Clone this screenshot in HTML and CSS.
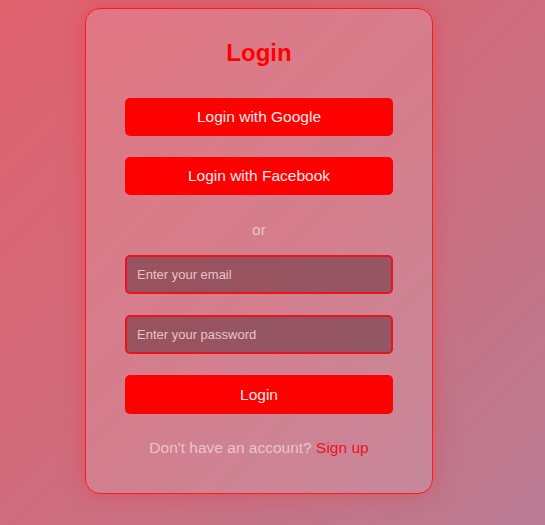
FILE: index.html
```html
<!DOCTYPE html>
<html>
<head>
<meta charset="utf-8">
<link rel="stylesheet" href="styles.css">
</head>
<body>
<div class="card">
  <h2 class="title">Login</h2>
  <button class="btn btn-first">Login with Google</button>
  <button class="btn btn-next">Login with Facebook</button>
  <p class="or">or</p>
  <input class="field field-first" type="email" placeholder="Enter your email">
  <input class="field field-next" type="password" placeholder="Enter your password">
  <button class="btn btn-submit">Login</button>
  <p class="footer">Don't have an account? <a class="signup" href="#">Sign up</a></p>
</div>
</body>
</html>
```
FILE: styles.css
```css
html, body {
  margin: 0;
  height: 100%;
}
body {
  background: linear-gradient(135deg, #e0626f 0%, #cf6d7e 50%, #b97c93 100%);
  font-family: "Liberation Sans", Arial, sans-serif;
  padding: 8px 0 0 85px;
  box-sizing: border-box;
  overflow: hidden;
}
.card {
  width: 348px;
  box-sizing: border-box;
  border: 1px solid #ff1a1a;
  border-radius: 15px;
  background: rgba(255, 255, 255, 0.12);
  box-shadow: 0 0 24px rgba(255, 0, 0, 0.25);
  padding: 30px 39px 36px;
  display: flex;
  flex-direction: column;
  align-items: stretch;
}
.title {
  margin: 0;
  font-size: 24px;
  line-height: 28px;
  font-weight: bold;
  color: #f00;
  text-align: center;
}
.btn {
  height: 38px;
  border: none;
  border-radius: 5px;
  background: #ff0000;
  color: #fbe9ea;
  font-family: "Liberation Sans", Arial, sans-serif;
  font-size: 15.5px;
  padding: 0;
}
.btn-first { margin-top: 31px; }
.btn-next { margin-top: 21px; }
.btn-submit { margin-top: 21px; height: 39px; }
.or {
  margin: 26px 0 0;
  text-align: center;
  font-size: 15.5px;
  line-height: 18px;
  color: rgba(255, 255, 255, 0.55);
}
.field {
  height: 39px;
  box-sizing: border-box;
  border: 2px solid #e8141e;
  border-radius: 5px;
  background: rgba(60, 20, 30, 0.4);
  color: #f0d0d6;
  font-family: "Liberation Sans", Arial, sans-serif;
  font-size: 13px;
  padding: 0 10px;
  outline: none;
}
.field::placeholder { color: #e6c3ca; }
.field-first { margin-top: 16px; }
.field-next { margin-top: 21px; }
.footer {
  margin: 25px 0 0;
  text-align: center;
  font-size: 15.5px;
  line-height: 18px;
  color: rgba(255, 255, 255, 0.55);
}
.signup {
  color: #f01020;
  text-decoration: none;
}
```
